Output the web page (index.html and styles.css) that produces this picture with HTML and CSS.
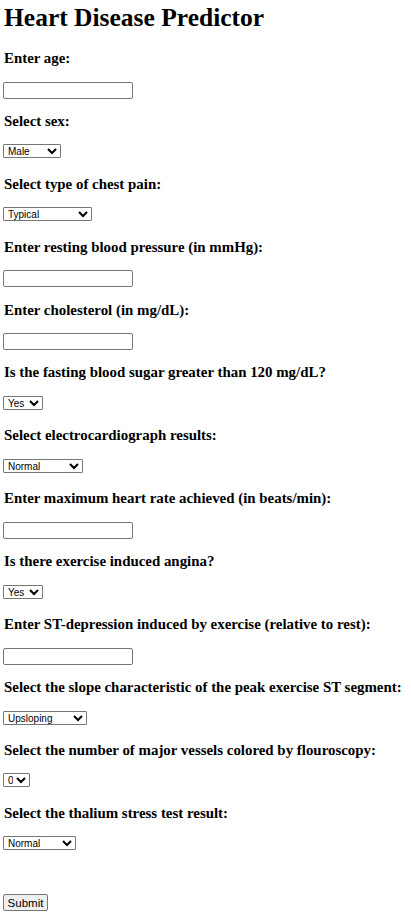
FILE: index.html
```html
<!DOCTYPE html>
<html lang="en">
<head>
<meta charset="utf-8">
<title>Heart Disease Predictor</title>
<link rel="stylesheet" href="styles.css">
</head>
<body>
<h1 class="title">Heart Disease Predictor</h1>
<form class="form">
  <div class="field">
    <label class="label" for="age">Enter age:</label>
    <div class="control"><input class="text" id="age" type="text"></div>
  </div>
  <div class="field">
    <label class="label" for="sex">Select sex:</label>
    <div class="control"><select class="sel w-sex" id="sex"><option>Male</option><option>Female</option></select></div>
  </div>
  <div class="field">
    <label class="label" for="cp">Select type of chest pain:</label>
    <div class="control"><select class="sel w-cp" id="cp"><option>Typical</option><option>Atypical</option><option>Non-anginal</option><option>Asymptomatic</option></select></div>
  </div>
  <div class="field">
    <label class="label" for="bp">Enter resting blood pressure (in mmHg):</label>
    <div class="control"><input class="text" id="bp" type="text"></div>
  </div>
  <div class="field">
    <label class="label" for="chol">Enter cholesterol (in mg/dL):</label>
    <div class="control"><input class="text" id="chol" type="text"></div>
  </div>
  <div class="field">
    <label class="label" for="fbs">Is the fasting blood sugar greater than 120 mg/dL?</label>
    <div class="control"><select class="sel w-yes" id="fbs"><option>Yes</option><option>No</option></select></div>
  </div>
  <div class="field">
    <label class="label" for="ecg">Select electrocardiograph results:</label>
    <div class="control"><select class="sel w-ecg" id="ecg"><option>Normal</option><option>Abnormal</option></select></div>
  </div>
  <div class="field">
    <label class="label" for="hr">Enter maximum heart rate achieved (in beats/min):</label>
    <div class="control"><input class="text" id="hr" type="text"></div>
  </div>
  <div class="field">
    <label class="label" for="ang">Is there exercise induced angina?</label>
    <div class="control"><select class="sel w-yes" id="ang"><option>Yes</option><option>No</option></select></div>
  </div>
  <div class="field">
    <label class="label" for="st">Enter ST-depression induced by exercise (relative to rest):</label>
    <div class="control"><input class="text" id="st" type="text"></div>
  </div>
  <div class="field">
    <label class="label" for="slope">Select the slope characteristic of the peak exercise ST segment:</label>
    <div class="control"><select class="sel w-slope" id="slope"><option>Upsloping</option><option>Flat</option><option>Downsloping</option></select></div>
  </div>
  <div class="field">
    <label class="label" for="ca">Select the number of major vessels colored by flouroscopy:</label>
    <div class="control"><select class="sel w-ca" id="ca"><option>0</option><option>1</option><option>2</option><option>3</option></select></div>
  </div>
  <div class="field">
    <label class="label" for="thal">Select the thalium stress test result:</label>
    <div class="control"><select class="sel w-thal" id="thal"><option>Normal</option><option>Fixed defect</option><option>Reversible defect</option></select></div>
  </div>
  <div class="actions">
    <button class="submit" type="submit">Submit</button>
  </div>
</form>
</body>
</html>
```
FILE: styles.css
```css
html, body {
  margin: 0;
  padding: 0;
  background: #fff;
  color: #000;
}
body {
  padding: 0 3px;
  font-family: "Liberation Serif", "Times New Roman", serif;
}
.title {
  margin: 0;
  padding-top: 3.5px;
  padding-left: 1px;
  font-size: 25.5px;
  line-height: 28px;
  font-weight: bold;
  white-space: nowrap;
}
.form {
  display: flex;
  flex-direction: column;
  margin-top: 18.5px;
}
.field {
  display: flex;
  flex-direction: column;
  gap: 15.6px;
  margin-bottom: 14.3px;
}
.label {
  display: block;
  padding-left: 1px;
  font-size: 14.9px;
  line-height: 16px;
  font-weight: bold;
  white-space: nowrap;
}
.control {
  height: 17px;
  display: flex;
  align-items: flex-start;
}
.text {
  box-sizing: border-box;
  width: 130px;
  height: 17px;
  margin: 0;
  padding: 0 2px;
  border: 1px solid #767676;
  border-radius: 2px;
  background: #fff;
  font-family: "Liberation Sans", Arial, sans-serif;
  font-size: 11px;
}
.sel {
  box-sizing: border-box;
  height: 14px;
  margin: 0;
  padding: 0;
  border: 1px solid #767676;
  border-radius: 1px;
  background: #fff;
  color: #000;
  font-family: "Liberation Sans", Arial, sans-serif;
  font-size: 10px;
  line-height: 12px;
}
.w-sex { width: 58px; }
.w-cp { width: 89px; }
.w-yes { width: 40px; }
.w-ecg { width: 80px; }
.w-slope { width: 84px; }
.w-ca { width: 27px; }
.w-thal { width: 73px; }
.actions {
  margin-top: 25px;
}
.submit {
  box-sizing: border-box;
  width: 45px;
  height: 17px;
  margin: 0;
  padding: 0;
  border: 1px solid #767676;
  border-radius: 2px;
  background: #efefef;
  color: #000;
  font-family: "Liberation Sans", Arial, sans-serif;
  font-size: 11.5px;
}
```
